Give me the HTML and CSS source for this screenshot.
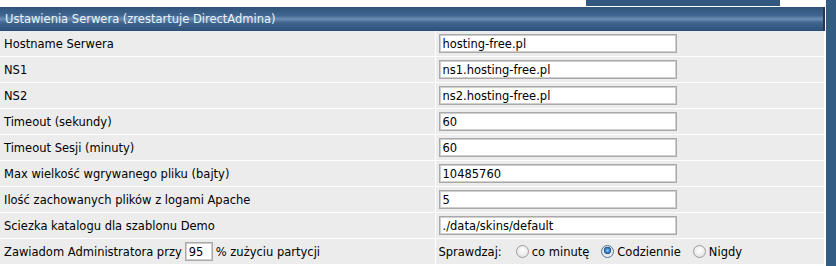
FILE: index.html
```html
<!DOCTYPE html>
<html lang="pl">
<head>
    <meta charset="UTF-8">
    <title>Ustawienia Serwera</title>
    <link rel="stylesheet" href="styles.css">
</head>
<body>
    <div class="page">
        <div class="main">
            <!-- top strip with the tab remnant -->
            <div class="top-strip">
                <div class="top-tab"></div>
            </div>

            <table class="settings">
                <colgroup>
                    <col class="col-label">
                    <col class="col-value">
                </colgroup>
                <tr>
                    <th colspan="2" class="header">Ustawienia Serwera (zrestartuje DirectAdmina)</th>
                </tr>
                <tr>
                    <td class="label">Hostname Serwera</td>
                    <td class="value"><input type="text" class="field" value="hosting-free.pl"></td>
                </tr>
                <tr>
                    <td class="label">NS1</td>
                    <td class="value"><input type="text" class="field" value="ns1.hosting-free.pl"></td>
                </tr>
                <tr>
                    <td class="label">NS2</td>
                    <td class="value"><input type="text" class="field" value="ns2.hosting-free.pl"></td>
                </tr>
                <tr>
                    <td class="label">Timeout (sekundy)</td>
                    <td class="value"><input type="text" class="field" value="60"></td>
                </tr>
                <tr>
                    <td class="label">Timeout Sesji (minuty)</td>
                    <td class="value"><input type="text" class="field" value="60"></td>
                </tr>
                <tr>
                    <td class="label">Max wielkość wgrywanego pliku (bajty)</td>
                    <td class="value"><input type="text" class="field" value="10485760"></td>
                </tr>
                <tr>
                    <td class="label">Ilość zachowanych plików z logami Apache</td>
                    <td class="value"><input type="text" class="field" value="5"></td>
                </tr>
                <tr>
                    <td class="label">Sciezka katalogu dla szablonu Demo</td>
                    <td class="value"><input type="text" class="field" value="./data/skins/default"></td>
                </tr>
                <tr>
                    <td class="label">
                        <span class="inline-row">Zawiadom Administratora przy<input type="text" class="field small" value="95">% zużyciu partycji</span>
                    </td>
                    <td class="value">
                        <span class="inline-row">Sprawdzaj:<label class="opt"><input type="radio" name="check" class="radio">co minutę</label><label class="opt"><input type="radio" name="check" class="radio" checked>Codziennie</label><label class="opt"><input type="radio" name="check" class="radio">Nigdy</label></span>
                    </td>
                </tr>
            </table>
        </div>
        <div class="side-strip"></div>
    </div>
</body>
</html>
```

FILE: styles.css
```css
/* General */
body {
    margin: 0;
    background: #fff;
    font-family: 'DejaVu Sans', Verdana, sans-serif;
    font-size: 11.5px;
    color: #000;
}

.page {
    display: flex;
    gap: 1px;
    height: 266px;
    overflow: hidden;
}

.main {
    width: 825px;
}

.side-strip {
    width: 10px;
    background: #335c85;
}

/* Top strip */
.top-strip {
    height: 7px;
    display: flex;
}

.top-tab {
    width: 194px;
    height: 6px;
    margin-left: 586px;
    background: #32587f;
}

/* Settings table */
.settings {
    width: 825px;
    table-layout: fixed;
    border-collapse: collapse;
}

.col-label {
    width: 435px;
}

.header {
    height: 24px;
    padding: 0 0 0 5px;
    text-align: left;
    font-weight: normal;
    color: #eef2f7;
    background: linear-gradient(#2f5379 0%, #3f6690 35%, #6a8db3 50%, #3f6690 65%, #2c5178 100%);
    border-right: 2px solid #27384c;
    box-sizing: border-box;
}

.settings td {
    height: 25px;
    padding: 0;
    background: #ececec;
    border-bottom: 1px solid #fff;
    white-space: nowrap;
}

.label {
    padding-left: 4px !important;
    border-right: 1px solid #fff;
}

.value {
    padding-left: 3px !important;
}

/* Inputs */
.field {
    box-sizing: border-box;
    width: 238px;
    height: 19px;
    margin: 0;
    padding: 0 3px;
    border: 1px solid #a9a9a9;
    outline: 1px solid #cfcfcf;
    outline-offset: -2px;
    font-family: inherit;
    font-size: 11.5px;
    color: #000;
    background: #fff;
    vertical-align: middle;
}

.field.small {
    width: 28px;
    margin: 0 3px;
}

.inline-row {
    display: inline-flex;
    align-items: center;
}

.opt {
    display: inline-flex;
    align-items: center;
    margin-left: 14px;
}

.opt + .opt {
    margin-left: 12px;
}

/* Radio buttons */
.radio {
    appearance: none;
    box-sizing: border-box;
    width: 13px;
    height: 13px;
    margin: 0 3px 0 0;
    border: 1px solid #9c9c9c;
    border-radius: 50%;
    background: radial-gradient(circle at 50% 40%, #fff 0%, #f0f0f0 45%, #d8d8d8 100%);
}

.radio:checked {
    border-color: #5b6f86;
    background: radial-gradient(circle at 50% 40%, #9ac6f0 0%, #2f78c4 28%, #1d4f8a 40%, #dfe4ea 46%, #f4f4f4 80%, #d2d2d2 100%);
}
```
